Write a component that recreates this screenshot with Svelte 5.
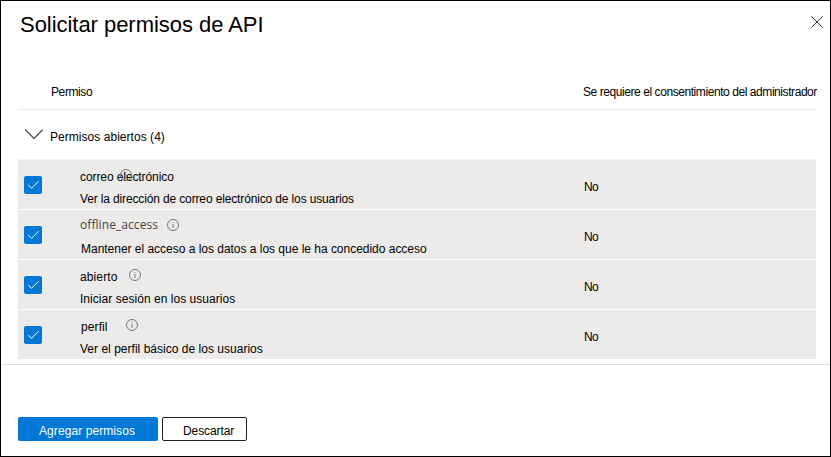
<script>
  const permissions = [
    { name: 'correo electrónico', description: 'Ver la dirección de correo electrónico de los usuarios', consent: 'No', kind: 'email' },
    { name: 'offline_access', description: 'Mantener el acceso a los datos a los que le ha concedido acceso', consent: 'No', kind: 'offline' },
    { name: 'abierto', description: 'Iniciar sesión en los usuarios', consent: 'No', kind: 'openid' },
    { name: 'perfil', description: 'Ver el perfil básico de los usuarios', consent: 'No', kind: 'profile' }
  ];
</script>

<main class="panel">
  <header class="top">
    <h1>Solicitar permisos de API</h1>
    <button class="close" aria-label="Cerrar">
      <svg width="12" height="12" viewBox="0 0 12 12"><path d="M.3.3 11.7 11.7M11.7.3.3 11.7" /></svg>
    </button>
  </header>

  <section class="table">
    <div class="columns">
      <span class="col-name">Permiso</span>
      <span class="col-consent">Se requiere el consentimiento del administrador</span>
    </div>
    <div class="group">
      <svg width="20" height="11" viewBox="0 0 20 11"><path d="M1.2 .7 10 9.5 18.8 .7" /></svg>
      <span>Permisos abiertos (4)</span>
    </div>
    <div class="rows">
      {#each permissions as p}
        <div class="row {p.kind}">
          <span class="check" role="checkbox" aria-checked="true" aria-label={p.name} tabindex="0">
            <svg width="18" height="18" viewBox="0 0 18 18"><path d="M4.2 9 7.5 12.3 14.6 5.2" /></svg>
          </span>
          <div class="info">
            <div class="title">
              <span class="name">{p.name}</span>
              <svg class="hint" width="12" height="12" viewBox="0 0 12 12">
                <circle cx="6" cy="6" r="5.5" />
                <path d="M6 5V9M6 3V4" />
              </svg>
            </div>
            <div class="description">{p.description}</div>
          </div>
          <span class="consent">{p.consent}</span>
        </div>
      {/each}
    </div>
  </section>

  <footer>
    <button class="primary">Agregar permisos</button>
    <button class="secondary">Descartar</button>
  </footer>
</main>

<style>
  .panel {
    box-sizing: border-box;
    width: 831px;
    height: 457px;
    border: 1px solid #000;
    background: #fff;
    color: #000;
    font: 12px/16px "Liberation Sans", Arial, sans-serif;
    letter-spacing: 0.04px;
    white-space: nowrap;
    overflow: hidden;
    display: flex;
    flex-direction: column;
  }
  svg { display: block; fill: none; flex: none; }
  button { font: inherit; letter-spacing: inherit; margin: 0; padding: 0; border: 0; background: none; box-sizing: border-box; }
  .top { display: flex; justify-content: space-between; height: 73px; padding: 10px 7px 0 19px; box-sizing: border-box; }
  h1 { margin: 0; font-size: 22px; line-height: 28px; font-weight: 400; letter-spacing: -0.04px; }
  .close { height: 12px; margin-top: 5px; }
  .close svg { stroke: #333; stroke-width: 1; }
  .table { margin: 0 14px 0 17px; }
  .columns { display: flex; height: 36px; box-sizing: border-box; padding: 10px 0 0 33px; border-bottom: 1px solid #eaeaea; }
  .col-name { width: 532px; flex: none; letter-spacing: -0.4px; }
  .col-consent { letter-spacing: -0.43px; }
  .group { display: flex; height: 49px; box-sizing: border-box; padding: 19px 0 0 6px; }
  .group span { margin-left: 6px; }
  .group svg { stroke: #333; stroke-width: 1.1; }
  .rows { border-top: 1px solid #f3f2f1; }
  .row { display: flex; height: 50px; box-sizing: border-box; background: #ecebe9; border-bottom: 1px solid #fff; }
  .check { width: 18px; height: 18px; margin: 16px 0 0 6px; border-radius: 2px; background: #0078d7; flex: none; }
  .check svg { stroke: #fff; stroke-width: 1; }
  .info { width: 504px; margin-left: 38px; padding-top: 9px; box-sizing: border-box; flex: none; }
  .title { display: flex; height: 16px; }
  .name { flex: none; }
  .hint { stroke: #777; stroke-width: 1; }
  .description { margin-top: 6px; }
  .consent { padding-top: 19px; letter-spacing: -0.7px; }
  .email .name { width: 40px; letter-spacing: -0.09px; }
  .email .description { letter-spacing: -0.14px; }
  .offline .name { width: 87px; font-family: "Open Sans", "Noto Sans", sans-serif; color: #444; margin-top: -2px; letter-spacing: 0.07px; }
  .offline .description { margin-left: 1px; letter-spacing: -0.02px; }
  .openid .name { width: 49px; letter-spacing: 0.12px; }
  .profile .name { width: 45px; margin-left: 1px; letter-spacing: 0.1px; }
  .profile .description { letter-spacing: 0.02px; }
  footer { display: flex; margin-top: 4px; padding: 52px 0 0 17px; border-top: 1px solid #dedede; gap: 4px; }
  footer button { height: 24px; border-radius: 2px; line-height: 16px; text-align: left; }
  .primary { width: 140px; padding: 3px 0 0 21px; background: #0078d7; color: #fff; letter-spacing: 0.08px; }
  .secondary { width: 85px; padding: 3px 0 0 20px; border: 1px solid #222; color: #000; letter-spacing: -0.1px; }
</style>
